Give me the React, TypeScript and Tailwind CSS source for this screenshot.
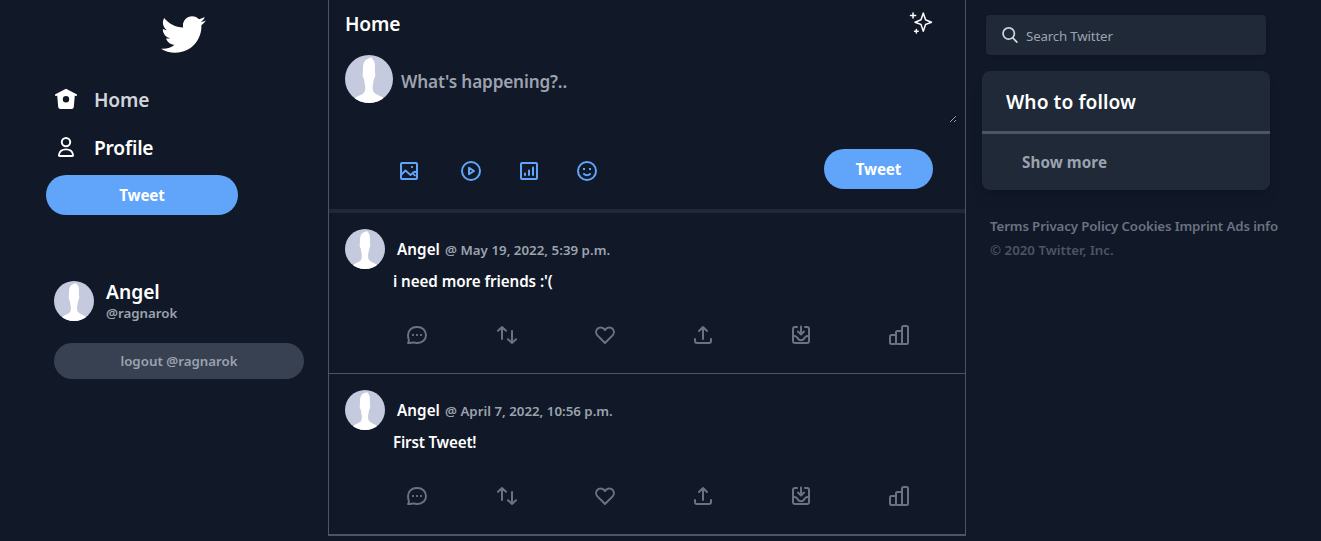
import React from "react";
import { FaTwitter } from "react-icons/fa";

type IconProps = { className?: string };

function Stroke({ className = "", children }: IconProps & { children: React.ReactNode }) {
  return (
    <svg
      viewBox="0 0 24 24"
      width="24"
      height="24"
      fill="none"
      stroke="currentColor"
      strokeWidth="2"
      strokeLinecap="round"
      strokeLinejoin="round"
      className={`shrink-0 ${className}`}
    >
      {children}
    </svg>
  );
}

const HomeIcon = () => (
  <svg viewBox="0 0 24 24" width="24" height="24" className="shrink-0" fill="currentColor" fillRule="evenodd">
    <path d="M12 .8 L22.6 6.200 Q23.200 6.600 22.900 7.400 Q22.500 8.200 21.700 8 L20.800 7.600 L19.800 19 Q19.600 21 17.600 21 H6.400 Q4.400 21 4.200 19 L3.200 7.600 L2.300 8 Q1.500 8.200 1.100 7.400 Q.8 6.600 1.400 6.200 Z M12 8 a3.200 3.200 0 1 0 0 6.400 a3.200 3.200 0 1 0 0 -6.400 Z" />
  </svg>
);

const ProfileIcon = () => (
  <Stroke>
    <circle cx="12" cy="6.100" r="4.200" />
    <path d="M5.600 20h12.800c.5 0 .8-.4.700-.9-.5-3.500-3.200-5.700-7.100-5.700s-6.600 2.200-7.100 5.700c-.1.500.2.900.7.900Z" strokeWidth="1.800" />
  </Stroke>
);

const SparkleIcon = () => (
  <svg viewBox="0 0 24 24" width="24" height="24" fill="currentColor" className="shrink-0">
    <path d="M22.772 10.506l-5.618-2.192-2.16-6.5c-.102-.307-.39-.514-.712-.514s-.61.207-.712.513l-2.16 6.5-5.62 2.192c-.287.112-.477.39-.477.7s.19.585.478.698l5.62 2.192 2.16 6.5c.102.306.39.513.712.513s.61-.207.712-.513l2.16-6.5 5.62-2.192c.287-.112.477-.39.477-.7s-.19-.585-.478-.697zm-6.49 2.32c-.208.08-.37.25-.44.46l-1.56 4.695-1.56-4.693c-.07-.21-.23-.38-.438-.462l-4.155-1.62 4.154-1.622c.208-.08.37-.25.44-.462l1.56-4.693 1.56 4.694c.07.212.23.382.438.463l4.155 1.62-4.155 1.622zM6.663 3.812h-1.88V2.05c0-.414-.337-.75-.75-.75s-.75.336-.75.75v1.762H1.5c-.414 0-.75.336-.75.75s.336.75.75.75h1.782v1.762c0 .414.336.75.75.75s.75-.336.75-.75V5.312h1.88c.415 0 .75-.336.75-.75s-.335-.75-.75-.75zm2.535 15.622h-1.1v-1.016c0-.414-.335-.75-.75-.75s-.75.336-.75.75v1.016H5.57c-.414 0-.75.336-.75.75s.336.75.75.75H6.6v1.016c0 .414.335.75.75.75s.75-.336.75-.75v-1.016h1.098c.414 0 .75-.336.75-.75s-.336-.75-.75-.75z" />
  </svg>
);

const ImageIcon = () => (
  <Stroke>
    <rect x="4" y="4" width="16" height="16" rx="1" />
    <path d="M4.500 15.500 8.500 11.500 13.500 16l2-1.800M20 13.500c-1.800-1.200-3.800-.8-4 .4-.2 1.300 1.200 1.400 2 2.600" strokeWidth="1.800" />
    <path d="M15 8h.01" strokeWidth="1.800" strokeLinecap="square" />
  </Stroke>
);

const PlayIcon = () => (
  <Stroke>
    <circle cx="12" cy="12" r="9" />
    <path d="M10 8.800v6.400l5-3.200Z" />
  </Stroke>
);

const PollIcon = () => (
  <Stroke>
    <rect x="4" y="4" width="16" height="16" rx="1" />
    <path d="M8 14.500v1.500M12 11.500v4.500M16 8.500v7.500" />
  </Stroke>
);

const SmileIcon = () => (
  <Stroke>
    <circle cx="12" cy="12" r="9" />
    <path d="M9 15c.8.800 1.800 1.200 3 1.200s2.200-.4 3-1.200" />
    <path d="M9 10h.01M15 10h.01" strokeLinecap="square" />
  </Stroke>
);

const CommentIcon = () => (
  <Stroke>
    <path d="M3 20c.8-1 1-1.800.8-3.200C3.300 15.300 3 13.700 3 12c0-4.800 3.800-8 8.500-8h1c4.700 0 8.500 3.200 8.500 8s-3.800 8-8.500 8c-1.500 0-2.500-.5-4-.5-1.700 0-3 .5-5.500.5Z" strokeWidth="1.900" />
    <path d="M8 12h.01M12 12h.01M16 12h.01" strokeWidth="1.800" strokeLinecap="square" />
  </Stroke>
);

const RetweetIcon = ({ className }: IconProps) => (
  <Stroke className={className}>
    <path d="M7 16V4M3 7.800 7 4l4 3.800M17 8v12M13 16.200l4 3.800 4-3.800" />
  </Stroke>
);

const HeartIcon = () => (
  <Stroke>
    <path d="M12 20 4.400 12.400a4.900 4.900 0 0 1 0-6.600 4.500 4.500 0 0 1 6.500 0L12 7l1.100-1.200a4.500 4.500 0 0 1 6.500 0 4.900 4.900 0 0 1 0 6.600Z" />
  </Stroke>
);

const ShareIcon = () => (
  <Stroke>
    <path d="M12 16V4M8 8l4-4 4 4M4 16v2a2 2 0 0 0 2 2h12a2 2 0 0 0 2-2v-2" />
  </Stroke>
);

const SaveIcon = () => (
  <Stroke>
    <path d="M8 4H6a2 2 0 0 0-2 2v12a2 2 0 0 0 2 2h12a2 2 0 0 0 2-2V6a2 2 0 0 0-2-2h-2" />
    <path d="M12 3.500v7.500M9 8.500l3 3 3-3M4 13h1.500c.8 0 1.200.2 1.800.8l1.200 1a3.700 3.700 0 0 0 7 0l1.200-1c.6-.6 1-.8 1.800-.8H20" />
  </Stroke>
);

const StatsIcon = () => (
  <Stroke>
    <rect x="3" y="12" width="6" height="9" rx="1.500" />
    <path d="M9 12.500V9.500A1.500 1.500 0 0 1 10.500 8H15M9 19.500a1.500 1.500 0 0 0 1.500 1.500H16" />
    <rect x="15" y="3" width="6" height="18" rx="1.500" />
  </Stroke>
);

const SearchIcon = () => (
  <svg viewBox="0 0 56.966 56.966" width="16" height="16" fill="currentColor" className="shrink-0">
    <path d="M55.146,51.887L41.588,37.786c3.486-4.144,5.396-9.358,5.396-14.786c0-12.682-10.318-23-23-23s-23,10.318-23,23s10.318,23,23,23c4.761,0,9.298-1.436,13.177-4.162l13.661,14.208c0.571,0.593,1.339,0.92,2.162,0.92c0.779,0,1.518-0.297,2.079-0.837C56.255,54.982,56.293,53.08,55.146,51.887z M23.984,6c9.374,0,17,7.626,17,17s-7.626,17-17,17s-17-7.626-17-17S14.61,6,23.984,6z" />
  </svg>
);

function Avatar({ className = "size-10" }: IconProps) {
  return (
    <svg viewBox="0 0 48 48" className={`shrink-0 rounded-full bg-[#c5cadf] ${className}`}>
      <path
        fill="#fff"
        d="M22.500 4c1-.7 2.500-1 4.500-1.700-.2.700 0 1.200.3 1.700 2 1.500 2.600 4 2.600 7 0 2.500.1 4.500 0 6.500.7.500.4 2.500 0 4.500-.2 1-.5 1.500-1 1.700-.3 3.300-1.100 5.800-1.200 8-.1 2.300.2 4 1 5.300 1.300 2.300 6 3.500 9.100 5.500L42 48H6l4.500-5.500c3.100-2 7.400-3 8.700-5.300.8-1.300 1.100-3 1-5.300-.1-2.400-.9-4.900-1.200-8.200-.5-.2-.8-.7-1-1.700-.4-2-.7-4 0-4.500-.1-2-.1-4 .1-6.500.2-3.300 1.700-6 4.400-7Z"
      />
    </svg>
  );
}

type Tweet = { date: string; body: string; dateClass: string; bodyClass: string };

const tweets: Tweet[] = [
  {
    date: "@ May 19, 2022, 5:39 p.m.",
    body: "i need more friends :'(",
    dateClass: "tracking-[0.02px]",
    bodyClass: "tracking-[-0.07px]",
  },
  {
    date: "@ April 7, 2022, 10:56 p.m.",
    body: "First Tweet!",
    dateClass: "tracking-normal",
    bodyClass: "tracking-[-0.2px]",
  },
];

function TweetCard({ tweet }: { tweet: Tweet }) {
  return (
    <article className="h-[161px] border-b border-[#4b5563]">
      <div className="flex px-4 pt-4">
        <Avatar />
        <div className="ml-3 flex h-6 items-baseline gap-[5px] whitespace-nowrap pt-2">
          <span className="text-[15.2px]/6 font-semibold tracking-[0.08px]">Angel</span>
          <span className={`text-[13.3px]/6 font-semibold text-[#9ca3af] ${tweet.dateClass}`}>{tweet.date}</span>
        </div>
      </div>
      <p className={`pl-16 text-[15.2px]/6 font-semibold ${tweet.bodyClass}`}>{tweet.body}</p>
      <div className="flex gap-[74px] pl-[76px] pt-[30px] text-[#6b7280]">
        <CommentIcon />
        <RetweetIcon className="-ml-2" />
        <HeartIcon />
        <ShareIcon />
        <SaveIcon />
        <StatsIcon />
      </div>
    </article>
  );
}

export default function App() {
  return (
    <div className="flex h-[541px] overflow-hidden bg-[#111827] font-['Noto_Sans','Open_Sans',sans-serif] text-white">
      <aside className="w-[328px] shrink-0 pl-[46px]">
        <div className="flex h-[76px] pl-[115px] pt-3">
          <FaTwitter className="size-[45px]" />
        </div>
        <nav>
          <a className="flex h-12 items-center gap-4 pl-2 text-[19.2px]/7 font-semibold tracking-[-0.15px]">
            <HomeIcon />
            <span className="text-[#d1d5db]">Home</span>
          </a>
          <a className="flex h-12 items-center gap-4 pl-2 text-[19.2px]/7 font-semibold tracking-[-0.2px]">
            <ProfileIcon />
            Profile
          </a>
        </nav>
        <button className="mt-[3px] block h-10 w-48 rounded-full bg-[#60a5fa] text-[15.2px]/6 font-bold tracking-[-0.16px]">
          Tweet
        </button>
        <div className="mt-[66px] flex gap-3 pl-2">
          <Avatar />
          <div>
            <div className="h-6 text-[19.2px]/[22px] font-semibold">Angel</div>
            <div className="text-[13.3px]/4 font-semibold text-[#9ca3af]">@ragnarok</div>
          </div>
        </div>
        <button className="ml-2 mt-[22px] block h-9 w-[250px] rounded-full bg-[#374151] text-[13.3px]/5 font-semibold text-[#9ca3af]">
          logout @ragnarok
        </button>
      </aside>

      <main className="h-[536px] w-[638px] shrink-0 border-x border-b border-[#4b5563]">
        <header className="flex h-[47px] items-start justify-between pl-4 pr-8">
          <h1 className="pt-2.5 text-[19.2px]/7 font-semibold tracking-[-0.15px]">Home</h1>
          <div className="pt-[11px]">
            <SparkleIcon />
          </div>
        </header>
        <section className="h-[166px] border-b-4 border-[#1f2937]">
          <div className="flex h-[69px] pl-4 pr-2 pt-2">
            <Avatar className="size-12" />
            <textarea
              placeholder="What's happening?.."
              className="mt-3 block h-14 w-[564px] bg-transparent pl-2 pt-px text-[17.2px]/7 font-semibold tracking-[-0.16px] outline-none placeholder:text-[#9ca3af]"
            />
          </div>
          <div className="mt-[33px] flex h-10 items-center justify-between pl-[68px] pr-8 text-[#60a5fa]">
            <div className="flex pt-1">
              <ImageIcon />
              <span className="ml-[38px]"><PlayIcon /></span>
              <span className="ml-[34px]"><PollIcon /></span>
              <span className="ml-[34px]"><SmileIcon /></span>
            </div>
            <button className="h-10 w-[109px] rounded-full bg-[#60a5fa] text-[15.2px]/6 font-bold tracking-[-0.16px] text-white">
              Tweet
            </button>
          </div>
        </section>
        {tweets.map((t) => (
          <TweetCard key={t.date} tweet={t} />
        ))}
      </main>

      <aside className="grow pl-4 pt-[15px]">
        <div className="ml-1 flex h-10 w-[280px] items-center gap-2 rounded bg-[#1f2937] pl-4 text-[#d1d5db] shadow">
          <SearchIcon />
          <input
            placeholder="Search Twitter"
            className="mt-0.5 w-52 bg-transparent text-[13.3px]/5 tracking-[-0.17px] outline-none placeholder:text-[#9ca3af]"
          />
        </div>
        <section className="mt-4 h-[119px] w-72 rounded-lg bg-[#1f2937] shadow-lg">
          <h2 className="flex h-[63px] items-center border-b-[3px] border-[#4b5563] pl-6 pt-0.5 text-[19.2px]/7 font-semibold tracking-[0.06px]">
            Who to follow
          </h2>
          <div className="flex h-14 items-center pl-10 text-[15.2px]/6 font-bold tracking-[0.09px] text-[#9ca3af]">
            Show more
          </div>
        </section>
        <footer className="mt-6 whitespace-nowrap pl-2 text-[13.3px]/6 font-semibold">
          <p className="tracking-[-0.14px] text-[#6b7280]">Terms Privacy Policy Cookies Imprint Ads info</p>
          <p className="text-[#4b5563]">© 2020 Twitter, Inc.</p>
        </footer>
      </aside>
    </div>
  );
}
